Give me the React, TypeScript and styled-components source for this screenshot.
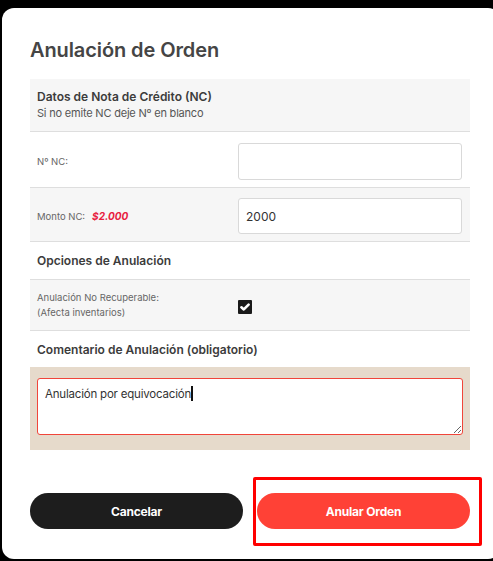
import React from "react";
import styled, { createGlobalStyle } from "styled-components";

const GlobalStyle = createGlobalStyle`
  html, body { margin: 0; padding: 0; background: #000; overflow: hidden; }
  body { font-family: Inter, "Noto Sans", Arial, sans-serif; }
  * { box-sizing: border-box; }
`;

const Card = styled.div`
  position: relative;
  margin: 8px 0 0 2px;
  width: 498px;
  height: 551px;
  background: #fff;
  border-radius: 12px;
  padding: 30px 30px 0 28px;
`;

const Title = styled.h1`
  margin: 0 0 17px;
  font-size: 20px;
  line-height: 24px;
  font-weight: 600;
  color: #454545;
  letter-spacing: -0.1px;
`;

const Panel = styled.div`
  width: 440px;
  display: flex;
  flex-direction: column;
`;

const Section = styled.div<{ $gray?: boolean; $border?: boolean; $h: number }>`
  background: ${(p) => (p.$gray ? "#f6f6f6" : "#fff")};
  border-bottom: ${(p) => (p.$border ? "1px solid #dedede" : "none")};
  min-height: ${(p) => p.$h}px;
`;

const HeaderBlock = styled.div`
  padding: 10px 7px;
  display: flex;
  flex-direction: column;
`;

const Strong = styled.div`
  font-size: 12px;
  line-height: 16px;
  font-weight: 600;
  color: #3c3c3c;
`;

const Sub = styled.div`
  font-size: 11px;
  line-height: 16px;
  color: #555;
  letter-spacing: -0.2px;
`;

const SectionTitle = styled.div<{ $h: number }>`
  height: ${(p) => p.$h}px;
  display: flex;
  align-items: center;
  padding: 0 7px;
  font-size: 12px;
  font-weight: 600;
  color: #3c3c3c;
`;

const Row = styled.div<{ $pad: string }>`
  display: grid;
  grid-template-columns: 201px 224px;
  align-items: center;
  padding: ${(p) => p.$pad};
`;

const Label = styled.div`
  font-size: 9.5px;
  line-height: 15px;
  color: #666;
  display: flex;
  align-items: center;
  gap: 7px;
`;

const Amount = styled.span`
  font-weight: 700;
  font-style: italic;
  color: #e8203e;
  font-size: 10px;
`;

const Input = styled.div<{ $h: number }>`
  height: ${(p) => p.$h}px;
  border: 1px solid #d9d9d9;
  border-radius: 3px;
  background: #fff;
  display: flex;
  align-items: center;
  padding: 0 7px;
  font-size: 12px;
  color: #333;
`;

const CheckBox = styled.span`
  width: 14px;
  height: 14px;
  background: #1a1a1a;
  border-radius: 1px;
  display: inline-flex;
  align-items: center;
  justify-content: center;
`;

const Beige = styled.div`
  background: #e6dacb;
  padding: 11px 7px 15px;
`;

const TextArea = styled.div`
  height: 57px;
  border: 1px solid #f0453a;
  border-radius: 3px;
  background: #fff;
  padding: 7px 7px;
  font-size: 11.5px;
  line-height: 16px;
  color: #333;
  letter-spacing: -0.2px;
  resize: vertical;
  overflow: auto;
`;

const Caret = styled.span`
  display: inline-block;
  width: 2px;
  height: 15px;
  background: #111;
  vertical-align: -3px;
`;

const Buttons = styled.div`
  margin-top: 43px;
  width: 440px;
  display: grid;
  grid-template-columns: 213px 213px;
  gap: 14px;
`;

const Button = styled.button<{ $variant: "dark" | "red" }>`
  height: 36px;
  border: none;
  border-radius: 18px;
  background: ${(p) => (p.$variant === "dark" ? "#1d1d1d" : "#ff4136")};
  color: #fff;
  font-family: Inter, "Noto Sans", Arial, sans-serif;
  font-size: 12px;
  font-weight: 700;
  letter-spacing: -0.2px;
  cursor: pointer;
`;

const Highlight = styled.div`
  position: absolute;
  left: 251px;
  top: 469px;
  width: 229px;
  height: 69px;
  border: 3px solid #ff0000;
  border-radius: 2px;
  pointer-events: none;
`;

export default function App() {
  return (
    <>
      <GlobalStyle />
      <Card>
        <Title>Anulación de Orden</Title>
        <Panel>
          <Section $gray $border $h={52}>
            <HeaderBlock>
              <Strong>Datos de Nota de Crédito (NC)</Strong>
              <Sub>Si no emite NC deje Nº en blanco</Sub>
            </HeaderBlock>
          </Section>
          <Section $border $h={56}>
            <Row $pad="11px 7px 7px">
              <Label>Nº NC:</Label>
              <Input $h={37} />
            </Row>
          </Section>
          <Section $gray $border $h={54}>
            <Row $pad="10px 7px 7px">
              <Label>
                Monto NC: <Amount>$2.000</Amount>
              </Label>
              <Input $h={36}>2000</Input>
            </Row>
          </Section>
          <Section $border $h={38}>
            <SectionTitle $h={37}>Opciones de Anulación</SectionTitle>
          </Section>
          <Section $gray $border $h={51}>
            <Row $pad="10px 7px 10px">
              <Label>
                Anulación No Recuperable:
                <br />
                (Afecta inventarios)
              </Label>
              <div>
                <CheckBox>
                  <svg width="10" height="8" viewBox="0 0 10 8">
                    <path d="M1.4 4.3 L3.8 6.4 L8.6 1.6" fill="none" stroke="#fff" strokeWidth="2.6" strokeLinecap="round" strokeLinejoin="round" />
                  </svg>
                </CheckBox>
              </div>
            </Row>
          </Section>
          <Section $h={36}>
            <SectionTitle $h={36}>Comentario de Anulación (obligatorio)</SectionTitle>
          </Section>
          <Beige>
            <TextArea>
              Anulación por equivocación
              <Caret />
            </TextArea>
          </Beige>
        </Panel>
        <Buttons>
          <Button $variant="dark">Cancelar</Button>
          <Button $variant="red">Anular Orden</Button>
        </Buttons>
        <Highlight />
      </Card>
    </>
  );
}
